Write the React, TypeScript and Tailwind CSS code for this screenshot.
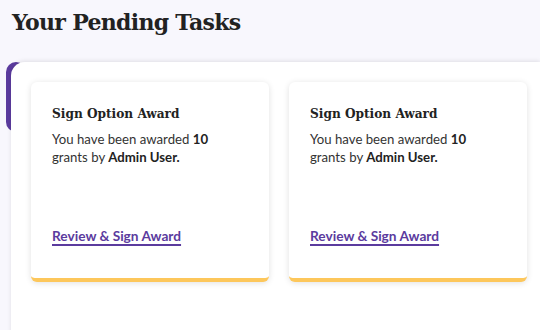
const tasks = [
  { id: 1, title: "Sign Option Award", grants: 10, by: "Admin User." },
  { id: 2, title: "Sign Option Award", grants: 10, by: "Admin User." },
];

function TaskCard({ title, grants, by }: { title: string; grants: number; by: string }) {
  return (
    <div className="flex h-[200px] w-[238px] shrink-0 flex-col rounded-md border-b-4 border-[#fdc75b] bg-white px-[21px] pt-[22px] shadow-[0_1px_6px_rgba(0,0,0,0.12)]">
      <h3 className="font-['DejaVu_Serif',serif] text-[13.5px] font-bold leading-[18px] font-stretch-condensed text-[#222]">
        {title}
      </h3>
      <p className="mt-[8px] text-[13.2px] leading-[18px] text-[#333]">
        You have been awarded <b className="font-bold text-[#222]">{grants}</b>
        <br />
        grants by <b className="font-bold text-[#222]">{by}</b>
      </p>
      <a
        href="#"
        className="mt-auto mb-[31px] self-start text-[13.7px] font-bold text-[#5b3b9e] underline decoration-[1.5px] underline-offset-[3px]"
      >
        Review &amp; Sign Award
      </a>
    </div>
  );
}

export default function App() {
  return (
    <div className="h-[330px] w-[540px] overflow-hidden bg-[#f8f7fd] font-['Lato',sans-serif]">
      <h1 className="px-[12px] pt-[8px] font-['DejaVu_Serif',serif] text-[22px] font-bold leading-[28px] tracking-[-0.7px] text-[#222]">
        Your Pending Tasks
      </h1>
      <div className="relative mt-[26px] ml-[6px]">
        <div className="absolute top-0 left-0 h-[70px] w-[20px] rounded-[10px] bg-[#5b3b9e]" />
        <div className="relative ml-[5px] h-[300px] rounded-tl-[14px] bg-white px-[20px] pt-[20px] shadow-[0_-1px_4px_rgba(0,0,0,0.1)]">
          <div className="flex gap-[20px]">
            {tasks.map((t) => (
              <TaskCard key={t.id} title={t.title} grants={t.grants} by={t.by} />
            ))}
          </div>
        </div>
      </div>
    </div>
  );
}
